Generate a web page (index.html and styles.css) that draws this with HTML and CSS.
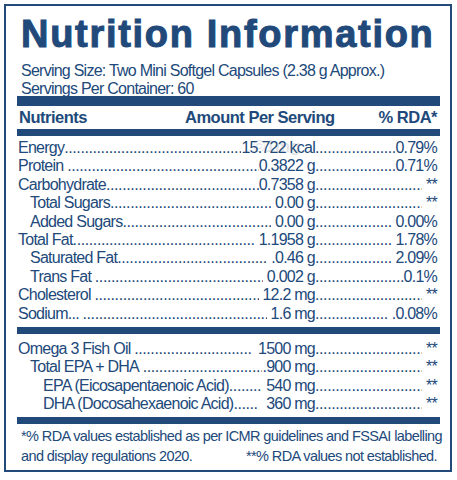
FILE: index.html
```html
<!DOCTYPE html>
<html lang="en">
	<head>
		<meta charset="UTF-8" />
		<meta name="viewport" content="width=device-width, initial-scale=1.0" />
		<title>Nutrition Information</title>
		<link rel="stylesheet" href="styles.css">
	</head>

	<body>
		<div class="label">
			<h1>Nutrition Information</h1>
			<p class="serving">Serving Size: Two Mini Softgel Capsules (2.38 g Approx.)</p>
			<p class="serving">Servings Per Container: 60</p>

			<div class="bar thick"></div>

			<div class="head">
				<span class="h-name">Nutrients</span>
				<span class="h-amt">Amount Per Serving</span>
				<span class="h-rda">% RDA*</span>
			</div>

			<div class="bar"></div>

			<!-- lignes principales -->
			<div class="rows">
				<div class="row">
					<div class="left"><span class="name">Energy</span><span class="lead"></span><span class="amt">15.722 kcal</span></div>
					<div class="right"><span class="lead"></span><span class="rda">0.79%</span></div>
					<span class="mark">&copy;1mg</span>
				</div>
				<div class="row">
					<div class="left"><span class="name">Protein&nbsp;</span><span class="lead"></span><span class="amt">0.3822 g</span></div>
					<div class="right"><span class="lead"></span><span class="rda">0.71%</span></div>
				</div>
				<div class="row">
					<div class="left"><span class="name">Carbohydrate</span><span class="lead"></span><span class="amt">0.7358 g</span></div>
					<div class="right"><span class="lead"></span><span class="rda">&nbsp;**</span></div>
				</div>
				<div class="row sub">
					<div class="left"><span class="name">Total Sugars</span><span class="lead"></span><span class="amt">&nbsp;0.00 g</span></div>
					<div class="right"><span class="lead"></span><span class="rda">&nbsp;**</span></div>
				</div>
				<div class="row sub">
					<div class="left"><span class="name">Added Sugars</span><span class="lead"></span><span class="amt">&nbsp;0.00 g</span></div>
					<div class="right"><span class="lead"></span><span class="rda">&nbsp;0.00%</span></div>
				</div>
				<div class="row">
					<div class="left"><span class="name">Total Fat</span><span class="lead"></span><span class="amt">&nbsp;1.1958 g</span></div>
					<div class="right"><span class="lead"></span><span class="rda">&nbsp;1.78%</span></div>
				</div>
				<div class="row sub">
					<div class="left"><span class="name">Saturated Fat</span><span class="lead"></span><span class="amt">&nbsp;.0.46 g</span></div>
					<div class="right"><span class="lead"></span><span class="rda">&nbsp;2.09%</span></div>
				</div>
				<div class="row sub">
					<div class="left"><span class="name">Trans Fat&nbsp;</span><span class="lead"></span><span class="amt">&nbsp;0.002 g</span></div>
					<div class="right"><span class="lead"></span><span class="rda">0.1%</span></div>
				</div>
				<div class="row">
					<div class="left"><span class="name">Cholesterol&nbsp;</span><span class="lead"></span><span class="amt">&nbsp;12.2 mg</span></div>
					<div class="right"><span class="lead"></span><span class="rda">&nbsp;**</span></div>
				</div>
				<div class="row">
					<div class="left"><span class="name">Sodium...&nbsp;</span><span class="lead"></span><span class="amt">&nbsp;1.6 mg</span></div>
					<div class="right"><span class="lead"></span><span class="rda">&nbsp;.0.08%</span></div>
				</div>
			</div>

			<div class="bar"></div>

			<!-- omega 3 -->
			<div class="rows omega">
				<div class="row">
					<div class="left"><span class="name">Omega 3 Fish Oil&nbsp;</span><span class="lead"></span><span class="amt">&nbsp; 1500 mg</span></div>
					<div class="right"><span class="lead"></span><span class="rda">&nbsp;**</span></div>
				</div>
				<div class="row sub">
					<div class="left"><span class="name">Total EPA + DHA&nbsp;</span><span class="lead"></span><span class="amt">.900 mg</span></div>
					<div class="right"><span class="lead"></span><span class="rda">&nbsp;**</span></div>
				</div>
				<div class="row sub2">
					<div class="left"><span class="name">EPA (Eicosapentaenoic Acid)</span><span class="lead"></span><span class="amt">&nbsp;540 mg</span></div>
					<div class="right"><span class="lead"></span><span class="rda">&nbsp;**</span></div>
				</div>
				<div class="row sub2">
					<div class="left"><span class="name">DHA (Docosahexaenoic Acid)</span><span class="lead"></span><span class="amt">&nbsp; 360 mg</span></div>
					<div class="right"><span class="lead"></span><span class="rda">&nbsp;**</span></div>
				</div>
			</div>

			<div class="bar"></div>

			<div class="notes">
				<p class="note-line">*% RDA values established as per ICMR guidelines and FSSAI labelling</p>
				<p class="note-line split"><span>and display regulations 2020.</span><span>**% RDA values not established.</span></p>
			</div>
		</div>
	</body>
</html>
```

FILE: styles.css
```css
body {
	margin: 0;
	padding: 0;
	background-color: #fff;
	font-family: "Liberation Sans", Arial, sans-serif;
	color: #21497a;
}
.label {
	box-sizing: border-box;
	width: 448px;
	height: 468px;
	margin: 4px;
	padding: 9px 10px 0 11px;
	border: 2px solid #21497a;
	overflow: hidden;
}
h1 {
	margin: 0 0 9px 0;
	padding-left: 4px;
	font-size: 38px;
	line-height: 38px;
	font-weight: bold;
	letter-spacing: 1.7px;
	-webkit-text-stroke: 1px #21497a;
	white-space: nowrap;
}
p {
	margin: 0;
}
.serving {
	padding-left: 4px;
	font-size: 16px;
	line-height: 18px;
	letter-spacing: -0.75px;
}
.bar {
	height: 7px;
	background-color: #21497a;
}
.bar.thick {
	height: 10px;
	margin-top: -2px;
}
.head {
	display: flex;
	height: 23px;
	align-items: center;
	padding: 0 3px 0 2px;
	font-size: 16.5px;
	font-weight: bold;
	letter-spacing: -0.5px;
	white-space: nowrap;
}
.h-name {
	width: 166px;
}
.h-amt {
	width: 150px;
}
.h-rda {
	flex: 1;
	text-align: right;
}
.rows {
	padding: 3px 0 4px 0;
}
.omega {
	padding: 6px 0 4px 0;
}
.row {
	position: relative;
	display: flex;
	font-size: 16px;
	line-height: 18.4px;
	letter-spacing: -0.75px;
	white-space: nowrap;
}
.omega .row {
	line-height: 18.3px;
}
.left {
	display: flex;
	flex: none;
	width: 298px;
	padding-left: 1px;
	box-sizing: border-box;
}
.right {
	display: flex;
	flex: 1;
	min-width: 0;
	padding-right: 3px;
}
.sub .left {
	padding-left: 13px;
}
.sub2 .left {
	padding-left: 26px;
}
.lead {
	flex: 1;
	min-width: 0;
	overflow: hidden;
	letter-spacing: -0.4px;
}
.lead::after {
	content: "................................................................................................................................";
}
.mark {
	position: absolute;
	left: 236px;
	top: -1px;
	font-size: 17px;
	font-weight: bold;
	letter-spacing: 0;
	color: rgba(120, 130, 140, 0.22);
}
.notes {
	padding: 2px 3px 0 4px;
}
.note-line {
	font-size: 14.5px;
	line-height: 20px;
	letter-spacing: -0.6px;
	white-space: nowrap;
}
.split {
	display: flex;
	justify-content: space-between;
}
```
